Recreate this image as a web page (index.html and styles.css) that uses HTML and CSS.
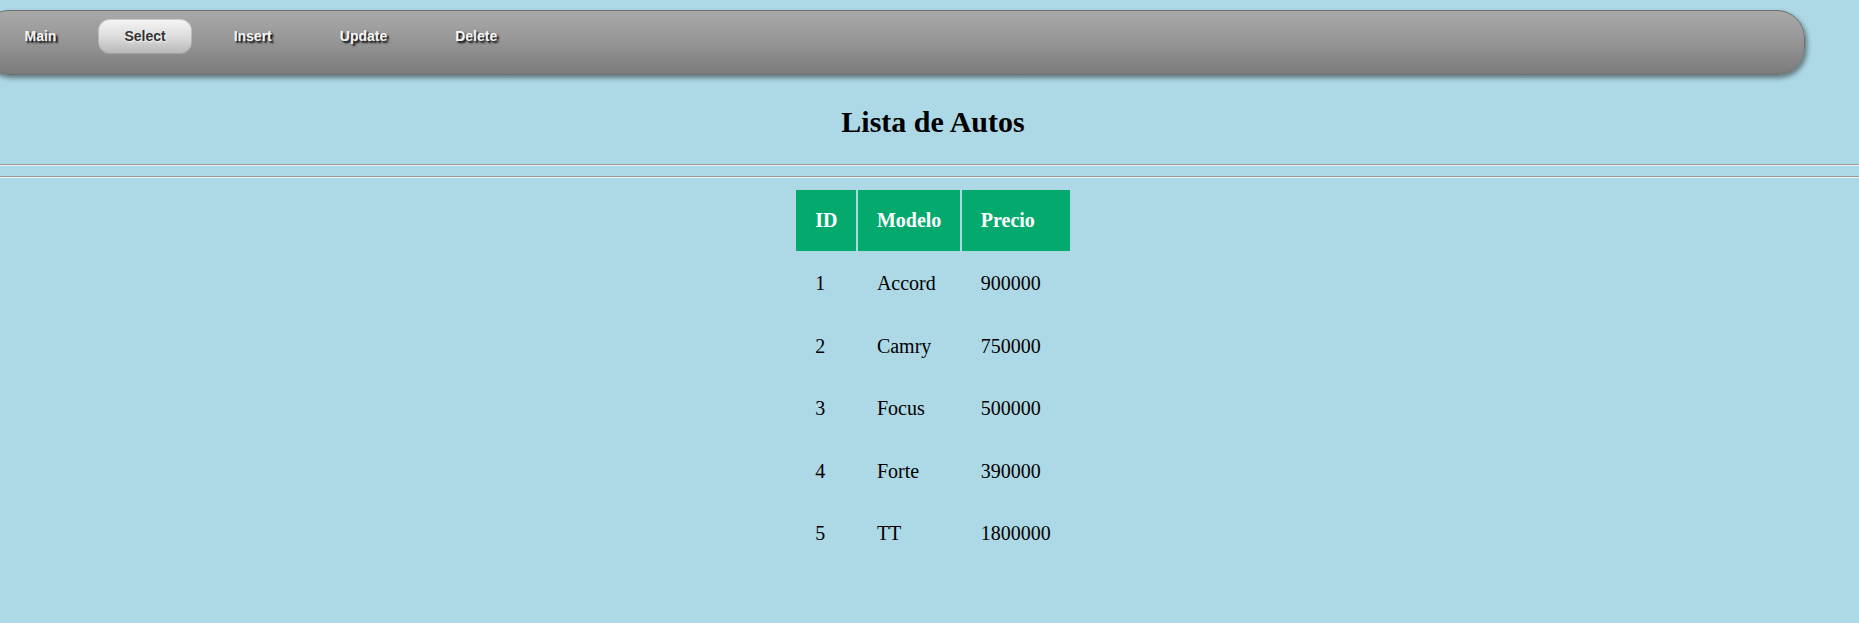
FILE: index.html
```html
<!DOCTYPE html>
<html lang="es">
<head>
<meta charset="utf-8">
<title>Lista de Autos</title>
<link rel="stylesheet" href="styles.css">
</head>
<body>
<nav class="navbar">
  <ul class="nav-list">
    <li><a class="nav-link" href="#">Main</a></li>
    <li><a class="nav-link active" href="#">Select</a></li>
    <li><a class="nav-link" href="#">Insert</a></li>
    <li><a class="nav-link" href="#">Update</a></li>
    <li><a class="nav-link" href="#">Delete</a></li>
  </ul>
</nav>
<main class="content">
  <h1 class="title">Lista de Autos</h1>
  <hr class="rule rule-first">
  <hr class="rule rule-second">
  <table class="cars">
    <thead>
      <tr><th>ID</th><th>Modelo</th><th>Precio</th></tr>
    </thead>
    <tbody>
      <tr><td>1</td><td>Accord</td><td>900000</td></tr>
      <tr><td>2</td><td>Camry</td><td>750000</td></tr>
      <tr><td>3</td><td>Focus</td><td>500000</td></tr>
      <tr><td>4</td><td>Forte</td><td>390000</td></tr>
      <tr><td>5</td><td>TT</td><td>1800000</td></tr>
    </tbody>
  </table>
</main>
</body>
</html>
```
FILE: styles.css
```css
html, body {
  margin: 0;
  padding: 0;
}
body {
  background: #add8e6;
  font-family: "Liberation Serif", "Times New Roman", serif;
  color: #000;
  overflow: hidden;
}
.navbar {
  margin: 10px 0 0 -19px;
  width: 1822px;
  height: 63px;
  box-sizing: content-box;
  border: 1px solid #6e6e6e;
  border-radius: 28px;
  background: linear-gradient(to bottom, #a9a9a9 0%, #959595 50%, #7b7b7b 100%);
  box-shadow: 2px 3px 5px rgba(0, 0, 0, 0.45);
}
.nav-list {
  list-style: none;
  margin: 0;
  padding: 8px 0 0 16px;
  display: flex;
  gap: 15px;
}
.nav-link {
  display: block;
  height: 35px;
  line-height: 35px;
  padding: 0 26.5px;
  border-radius: 12px;
  font-family: "Liberation Sans", Arial, sans-serif;
  font-weight: bold;
  font-size: 14px;
  color: #f4f4f4;
  text-decoration: none;
  text-shadow: 2px 2px 2px #000;
}
.nav-link.active {
  color: #333;
  text-shadow: 1px 1px 2px #fff;
  background: linear-gradient(to bottom, #f6f6f6 0%, #dcdcdc 50%, #b6b6b6 100%);
  box-shadow: inset 0 0 0 1px rgba(120, 120, 120, 0.35);
}
.content {
  padding-left: 7px;
}
.title {
  margin: 29.5px 0 0;
  text-align: center;
  font-size: 30px;
  line-height: 34px;
  font-weight: bold;
}
.rule {
  margin: 0;
  height: 0;
  border: 0;
  border-top: 1px solid #9c9c9c;
  border-bottom: 1px solid #eef2f3;
}
.rule-first {
  margin-top: 25.5px;
  margin-left: -7px;
}
.rule-second {
  margin-top: 10px;
  margin-left: -7px;
}
.cars {
  margin: 10px auto 0;
  border-collapse: separate;
  border-spacing: 2px;
  font-size: 20px;
  line-height: 23px;
}
.cars th,
.cars td {
  padding: 18.75px;
  text-align: left;
  vertical-align: middle;
}
.cars td {
  padding-top: 19.5px;
  padding-bottom: 18px;
}
.cars th {
  background: #04aa6d;
  color: #fff;
  font-weight: bold;
}
```
